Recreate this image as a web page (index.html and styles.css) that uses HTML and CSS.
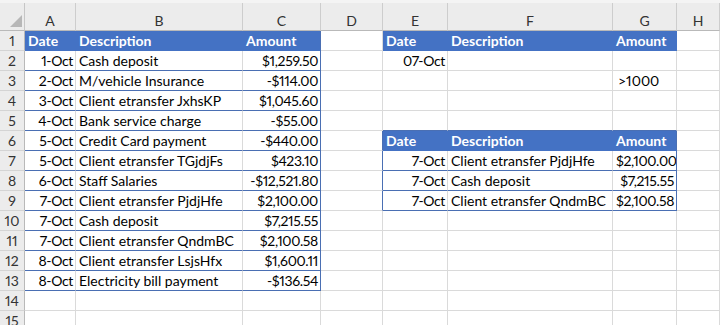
FILE: index.html
```html
<!DOCTYPE html>
<html>
<head>
<meta charset="utf-8">
<link rel="stylesheet" href="styles.css">
</head>
<body>
<div class="sheet">
  <div class="strip"></div>
  <div class="grid">
    <div class="corner"><span class="tri"></span></div>
    <div class="ch">A</div><div class="ch">B</div><div class="ch">C</div><div class="ch">D</div><div class="ch">E</div><div class="ch">F</div><div class="ch">G</div><div class="ch">H</div>

    <div class="rh">1</div>
    <div class="c hd">Date</div><div class="c hd">Description</div><div class="c hd te">Amount</div>
    <div class="c"></div>
    <div class="c hd">Date</div><div class="c hd">Description</div><div class="c hd">Amount</div><div class="c"></div>

    <div class="rh">2</div>
    <div class="c tb r">1-Oct</div><div class="c tb">Cash deposit</div><div class="c tb te r">$1,259.50</div>
    <div class="c"></div>
    <div class="c r">07-Oct</div><div class="c"></div><div class="c"></div><div class="c"></div>

    <div class="rh">3</div>
    <div class="c tb r">2-Oct</div><div class="c tb">M/vehicle Insurance</div><div class="c tb te r">-$114.00</div>
    <div class="c"></div>
    <div class="c"></div><div class="c"></div><div class="c crit">&gt;1000</div><div class="c"></div>

    <div class="rh">4</div>
    <div class="c tb r">3-Oct</div><div class="c tb">Client etransfer JxhsKP</div><div class="c tb te r">$1,045.60</div>
    <div class="c"></div>
    <div class="c"></div><div class="c"></div><div class="c"></div><div class="c"></div>

    <div class="rh">5</div>
    <div class="c tb r">4-Oct</div><div class="c tb">Bank service charge</div><div class="c tb te r">-$55.00</div>
    <div class="c"></div>
    <div class="c tb"></div><div class="c tb"></div><div class="c tb"></div><div class="c"></div>

    <div class="rh">6</div>
    <div class="c tb r">5-Oct</div><div class="c tb">Credit Card payment</div><div class="c tb te r">-$440.00</div>
    <div class="c te"></div>
    <div class="c hd">Date</div><div class="c hd">Description</div><div class="c hd te">Amount</div><div class="c"></div>

    <div class="rh">7</div>
    <div class="c tb r">5-Oct</div><div class="c tb">Client etransfer TGjdjFs</div><div class="c tb te r">$423.10</div>
    <div class="c te"></div>
    <div class="c tb r">7-Oct</div><div class="c tb">Client etransfer PjdjHfe</div><div class="c tb te r">$2,100.00</div><div class="c"></div>

    <div class="rh">8</div>
    <div class="c tb r">6-Oct</div><div class="c tb">Staff Salaries</div><div class="c tb te r">-$12,521.80</div>
    <div class="c te"></div>
    <div class="c tb r">7-Oct</div><div class="c tb">Cash deposit</div><div class="c tb te r">$7,215.55</div><div class="c"></div>

    <div class="rh">9</div>
    <div class="c tb r">7-Oct</div><div class="c tb">Client etransfer PjdjHfe</div><div class="c tb te r">$2,100.00</div>
    <div class="c te"></div>
    <div class="c tb r">7-Oct</div><div class="c tb">Client etransfer QndmBC</div><div class="c tb te r">$2,100.58</div><div class="c"></div>

    <div class="rh">10</div>
    <div class="c tb r">7-Oct</div><div class="c tb">Cash deposit</div><div class="c tb te r">$7,215.55</div>
    <div class="c"></div>
    <div class="c"></div><div class="c"></div><div class="c"></div><div class="c"></div>

    <div class="rh">11</div>
    <div class="c tb r">7-Oct</div><div class="c tb">Client etransfer QndmBC</div><div class="c tb te r">$2,100.58</div>
    <div class="c"></div>
    <div class="c"></div><div class="c"></div><div class="c"></div><div class="c"></div>

    <div class="rh">12</div>
    <div class="c tb r">8-Oct</div><div class="c tb">Client etransfer LsjsHfx</div><div class="c tb te r">$1,600.11</div>
    <div class="c"></div>
    <div class="c"></div><div class="c"></div><div class="c"></div><div class="c"></div>

    <div class="rh">13</div>
    <div class="c tb r">8-Oct</div><div class="c tb">Electricity bill payment</div><div class="c tb te r">-$136.54</div>
    <div class="c"></div>
    <div class="c"></div><div class="c"></div><div class="c"></div><div class="c"></div>

    <div class="rh">14</div>
    <div class="c"></div><div class="c"></div><div class="c"></div><div class="c"></div>
    <div class="c"></div><div class="c"></div><div class="c"></div><div class="c"></div>

    <div class="rh">15</div>
    <div class="c"></div><div class="c"></div><div class="c"></div><div class="c"></div>
    <div class="c"></div><div class="c"></div><div class="c"></div><div class="c"></div>
  </div>
</div>
</body>
</html>
```

FILE: styles.css
```css
html, body {
  margin: 0;
  padding: 0;
  background: #ffffff;
}

.sheet {
  width: 720px;
  height: 325px;
  overflow: hidden;
  font-family: Lato, "Open Sans", sans-serif;
  font-size: 14px;
  color: #000;
  font-variant-numeric: proportional-nums;
}

.strip {
  height: 3px;
  background: #f4f4f4;
}

.grid {
  display: grid;
  grid-template-columns: 25px 51px 167px 78px 62px 65px 165px 64px 1fr;
  grid-template-rows: 28px repeat(15, 20px);
}

.grid > div {
  box-sizing: border-box;
}

.corner {
  background: #ececec;
  border-right: 1px solid #c6c6c6;
  border-bottom: 1px solid #b9b9b9;
  position: relative;
}

.tri {
  position: absolute;
  right: 2px;
  bottom: 3px;
  width: 0;
  height: 0;
  border-left: 12px solid transparent;
  border-bottom: 12px solid #b7b7b7;
}

.ch {
  background: #ececec;
  border-right: 1px solid #cdcdcd;
  border-bottom: 1px solid #b9b9b9;
  display: flex;
  align-items: flex-end;
  justify-content: center;
  line-height: 19px;
  color: #333;
}

.rh {
  background: #ececec;
  border-right: 1px solid #b9b9b9;
  border-bottom: 1px solid #d4d4d4;
  text-align: center;
  line-height: 19px;
  color: #333;
}

.c {
  border-right: 1px solid #dadada;
  border-bottom: 1px solid #dadada;
  padding: 0 3px;
  line-height: 19px;
  white-space: nowrap;
  overflow: hidden;
}

.r {
  text-align: right;
  padding-right: 2px;
  letter-spacing: -0.35px;
}

.crit {
  padding-left: 5px;
}

.hd {
  background: #4472c4;
  color: #fff;
  font-weight: 700;
  border-color: #4472c4;
}

.tb {
  border-bottom-color: #4a6fb3;
}

.te {
  border-right-color: #4a6fb3;
}
```
